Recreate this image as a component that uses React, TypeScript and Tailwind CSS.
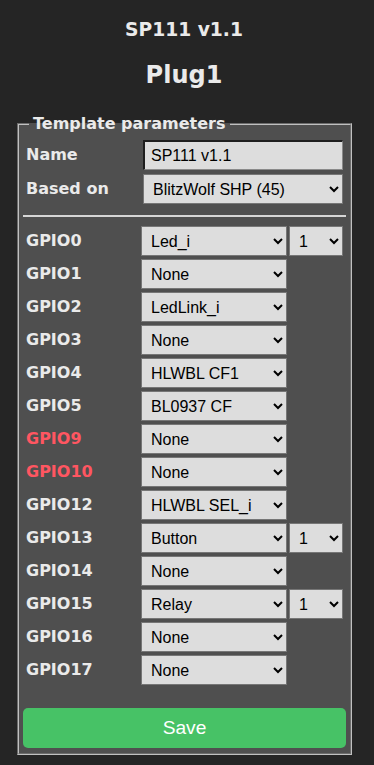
import { useState } from 'react';

type Pin = { gpio: string; func: string; index?: string; warn?: boolean };

const pins: Pin[] = [
  { gpio: 'GPIO0', func: 'Led_i', index: '1' },
  { gpio: 'GPIO1', func: 'None' },
  { gpio: 'GPIO2', func: 'LedLink_i' },
  { gpio: 'GPIO3', func: 'None' },
  { gpio: 'GPIO4', func: 'HLWBL CF1' },
  { gpio: 'GPIO5', func: 'BL0937 CF' },
  { gpio: 'GPIO9', func: 'None', warn: true },
  { gpio: 'GPIO10', func: 'None', warn: true },
  { gpio: 'GPIO12', func: 'HLWBL SEL_i' },
  { gpio: 'GPIO13', func: 'Button', index: '1' },
  { gpio: 'GPIO14', func: 'None' },
  { gpio: 'GPIO15', func: 'Relay', index: '1' },
  { gpio: 'GPIO16', func: 'None' },
  { gpio: 'GPIO17', func: 'None' },
];

const functions = ['None', 'Button', 'Relay', 'Led_i', 'LedLink_i', 'HLWBL CF1', 'BL0937 CF', 'HLWBL SEL_i'];

const selectCls =
  "h-[30px] bg-[#dddddd] text-black border border-[#767676] pl-[5px] text-[16px] font-['Liberation_Sans',Arial,sans-serif] leading-[normal]";

export default function App() {
  const [name, setName] = useState('SP111 v1.1');

  return (
    <div className="min-h-[765px] bg-[#252525] text-[#eaeaea] font-['DejaVu_Sans',Verdana,sans-serif] font-bold pt-[19px]">
      <div className="ml-[16px] w-[336px] text-center">
        <h3 className="text-[18.7px] leading-[22px]">SP111 v1.1</h3>
        <h2 className="text-[24px] leading-[28px] mt-[20px]">Plug1</h2>
      </div>

      <fieldset className="mt-[25px] ml-[17px] w-[335px] bg-[#4f4f4f] border-2 [border-style:groove] border-[#c0c0c0] px-[4px] pb-[5px]">
        <legend className="ml-[6px] px-[4px] text-[16px] leading-[19px]">Template parameters</legend>

        <div className="pt-[7px] flex flex-col gap-[4px]">
          <div className="flex items-center">
            <span className="w-[120px] pl-[3px] text-[16px]">Name</span>
            <input
              value={name}
              onChange={(e) => setName(e.target.value)}
              className="w-[200px] h-[30px] bg-[#dddddd] text-black pl-[6px] text-[16px] font-['Liberation_Sans',Arial,sans-serif] font-normal border-t-2 border-l-2 border-b border-r border-t-[#1e1e1e] border-l-[#1e1e1e] border-b-[#8a8a8a] border-r-[#8a8a8a]"
            />
          </div>
          <div className="flex items-center">
            <span className="w-[120px] pl-[3px] text-[16px]">Based on</span>
            <select defaultValue="45" className={`${selectCls} w-[200px] font-normal`}>
              <option value="45">BlitzWolf SHP (45)</option>
            </select>
          </div>
        </div>

        <hr className="mt-[11px] border-0 h-[2px] bg-[#d6d6d6]" />

        <div className="mt-[9px] flex flex-col gap-[3px]">
          {pins.map((p) => (
            <div key={p.gpio} className="flex items-center">
              <span className={`w-[118px] pl-[3px] text-[16px] ${p.warn ? 'text-[#ff5661]' : ''}`}>{p.gpio}</span>
              <select defaultValue={p.func} className={`${selectCls} w-[146px] font-normal`}>
                {functions.map((f) => (
                  <option key={f} value={f}>{f}</option>
                ))}
              </select>
              {p.index && (
                <select defaultValue={p.index} className={`${selectCls} w-[54px] ml-[2px] font-normal`}>
                  <option value="1">1</option>
                  <option value="2">2</option>
                </select>
              )}
            </div>
          ))}
        </div>

        <button className="mt-[23px] w-full h-[40px] rounded-[5px] bg-[#47c266] text-white text-[19.2px] font-normal font-['Liberation_Sans',Arial,sans-serif]">
          Save
        </button>
      </fieldset>
    </div>
  );
}
